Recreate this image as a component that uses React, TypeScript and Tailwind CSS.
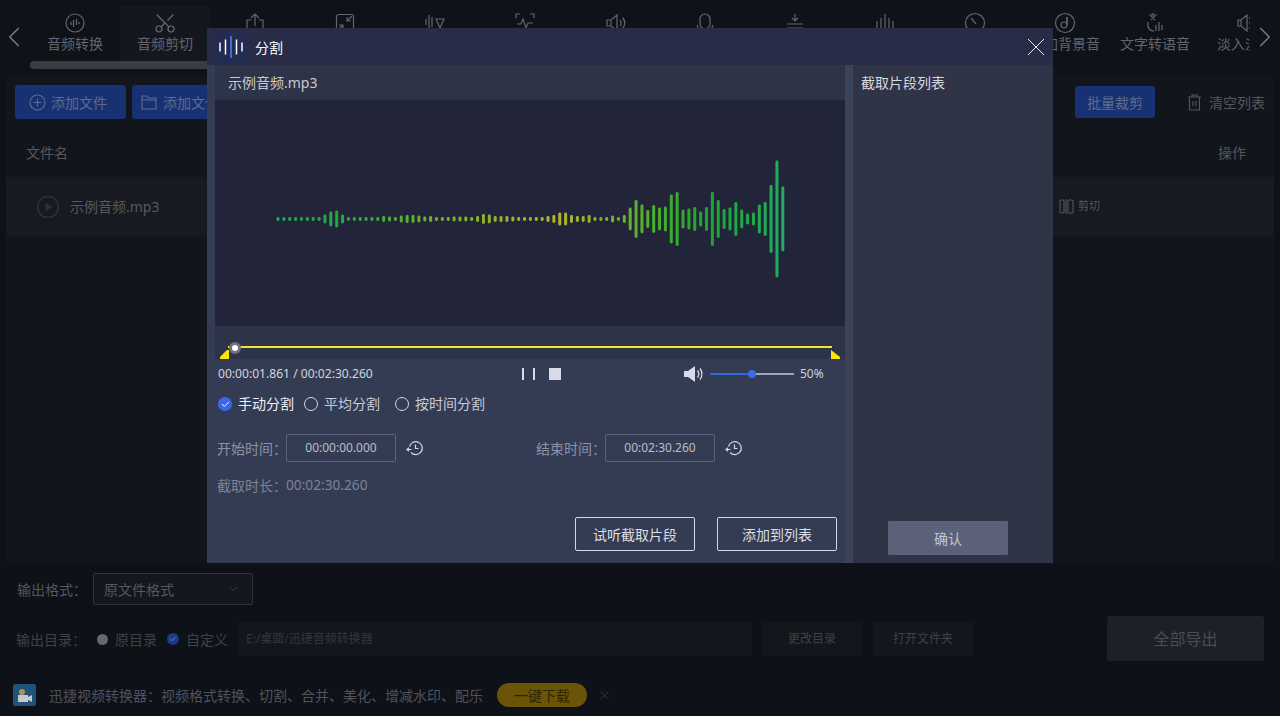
import React from "react";
import { ChevronLeft, ChevronRight, ChevronDown, Scissors, X, Check } from "lucide-react";

const font = "font-['Noto_Sans','Noto_Sans_CJK_SC',sans-serif]";

const heights = [
  3,3,3,3,3,3,3,3,8,14,16,8,
  3,3,3,3,3,3,5,4,3,6,7,7,6,4,5,3,3,3,4,4,4,3,5,9,8,5,5,5,4,3,3,
  3,3,3,5,7,12,12,7,5,5,7,3,3,3,6,3,7,
  22,37,28,17,27,22,24,48,53,18,20,23,14,23,53,37,19,22,33,18,10,12,28,33,67,116,64,
];

function Waveform() {
  return (
    <svg width="630" height="226" viewBox="215 100 630 226" className="block">
      <defs>
        <linearGradient id="wave" gradientUnits="userSpaceOnUse" x1="278" y1="0" x2="784" y2="0">
          <stop offset="0" stopColor="#1fa858" />
          <stop offset="0.12" stopColor="#22a83e" />
          <stop offset="0.3" stopColor="#6fb02e" />
          <stop offset="0.55" stopColor="#b5b52a" />
          <stop offset="0.72" stopColor="#55b02e" />
          <stop offset="0.85" stopColor="#1ba52f" />
          <stop offset="1" stopColor="#20ad62" />
        </linearGradient>
      </defs>
      {heights.map((h, i) => (
        <rect key={i} x={276.5 + i * 5.87} y={219 - (h + 1) / 2} width={3} height={h + 1} rx={1.4} fill="url(#wave)" />
      ))}
    </svg>
  );
}

function TabIcon({ i }: { i: number }) {
  const c = "#63666e";
  const p = { fill: "none", stroke: c, strokeWidth: 1.2 };
  return (
    <svg width="24" height="24" viewBox="0 0 24 24" className="block">
      {i === 0 && (
        <g {...p}>
          <circle cx="12" cy="12" r="9" />
          <path d="M8 11v3M10.5 9v7M13.5 8v6M16 11v2" />
        </g>
      )}
      {i === 2 && (
        <g {...p}>
          <path d="M8 9H4v12h16V9h-4M12 15V3M8 7l4-4 4 4" />
        </g>
      )}
      {i === 3 && (
        <g {...p}>
          <rect x="3.5" y="3.5" width="17" height="17" rx="2" />
          <path d="M19 5l-5 5M14 6v4h4M5 19l5-5M6 14h4v4" />
        </g>
      )}
      {i === 4 && (
        <g {...p}>
          <path d="M6 4v14M3 8v6M9 6v10M13 8l4 9 4-9z" />
        </g>
      )}
      {i === 5 && (
        <g {...p}>
          <path d="M3 7V3h4M17 3h4v4M3 17v4h4M21 17v4h-4M4 13h4l2-5 3 9 2-5h5" />
        </g>
      )}
      {i === 6 && (
        <g {...p}>
          <path d="M4 9h4l6-5v16l-6-5H4zM8 9v6M17 9c1.5 1.5 1.5 4.500 0 6M19.500 6.500c3 3 3 8 0 11" />
        </g>
      )}
      {i === 7 && (
        <g {...p}>
          <rect x="7" y="3" width="10" height="15" rx="5" />
          <path d="M4 14c1 4 4 7 8 7s7-3 8-7" />
        </g>
      )}
      {i === 8 && (
        <g {...p}>
          <path d="M12 3v7M9 7l3 3 3-3M4 13h16M4 17h16M12 20v2" />
        </g>
      )}
      {i === 9 && (
        <g {...p}>
          <path d="M4 10v8M8 7v13M12 3v17M16 7v13M20 10v8" />
        </g>
      )}
      {i === 10 && (
        <g {...p}>
          <circle cx="12" cy="12" r="9.500" />
          <path d="M8 7l5 6" />
        </g>
      )}
      {i === 11 && (
        <g {...p}>
          <circle cx="12" cy="12" r="9.500" />
          <circle cx="11" cy="14" r="3" />
          <path d="M14 14V6" strokeWidth="1.800" />
        </g>
      )}
      {i === 12 && (
        <g {...p}>
          <path d="M6 4h8M10 2v2M8 5l4 4M12 5l-4 4M5 11c-1 5 1 9 6 9M13 14v6M16 11v9M19 14v5" />
        </g>
      )}
      {i === 13 && (
        <g {...p}>
          <path d="M5 9h3l6-5v16l-6-5H5zM8 9v6M17 6v2M17 11v2M17 16v2" />
        </g>
      )}
    </svg>
  );
}

function HistoryIcon() {
  return (
    <svg width="18" height="18" viewBox="0 0 18 18" fill="none" stroke="#d4d6e2" strokeWidth="1.200" className="block">
      <path d="M3.500 7.500A6.500 6.500 0 1 1 5 13.500" />
      <path d="M1 10.500h4.500M3 8.800l-2 1.700 2 1.700" />
      <path d="M9.500 5.500V9.500H12.500" />
    </svg>
  );
}

function Radio({ label, checked }: { label: string; checked?: boolean }) {
  return (
    <div className="flex items-center gap-[6px]">
      {checked ? (
        <span className="flex items-center justify-center w-[14px] h-[14px] rounded-full bg-[#3a68ee]">
          <Check size={9} color="#fff" strokeWidth={2.5} />
        </span>
      ) : (
        <span className="w-[14px] h-[14px] rounded-full border border-[#d5d7e2]" />
      )}
      <span className={`text-[14px] leading-none ${checked ? "text-[#eef0f6]" : "text-[#c8cbd6]"}`}>{label}</span>
    </div>
  );
}

const tabs = ["音频转换","音频剪切","","","","","","","","","","添加背景音","文字转语音","淡入淡出"];

function Modal() {
  return (
    <div className="absolute left-[207px] top-[28px] w-[846px] h-[535px] bg-[#343c53] flex flex-col">
      <div className="h-[37px] shrink-0 bg-[#282c46] flex items-center pl-2 pr-[8px]">
        <div className="w-[32px] h-[32px] bg-[#232b4e] flex items-center justify-center">
          <svg width="28" height="22" viewBox="0 0 28 22" className="block">
            <path d="M3 6.500v9M8.500 3.500v15M19.500 3.500v15M25 6.500v9" stroke="#fff" strokeWidth="1.500" fill="none" />
            <path d="M14 0v22" stroke="#3a6ce6" strokeWidth="2" fill="none" />
          </svg>
        </div>
        <span className="ml-2 mt-[2px] text-[14px] text-white">分割</span>
        <svg width="18" height="18" viewBox="0 0 18 18" stroke="#e8e9f2" strokeWidth="1" fill="none" className="ml-auto block">
          <path d="M1 1l16 16M17 1L1 17" />
        </svg>
      </div>
      <div className="flex flex-1 min-h-0">
        <div className="w-[638px] pl-2 flex flex-col">
          <div className="h-[35px] bg-[#2e3447] flex items-center pl-[13px] text-[14px] text-[#c6c9d3]">示例音频.mp3</div>
          <div className="h-[226px] bg-[#222439]"><Waveform /></div>
          <div className="relative h-[33px] bg-[#2e3447]">
            <div className="absolute left-[13px] top-[20px] w-[604px] h-[2px] bg-[#f2e22c]" />
            <div className="absolute left-[14px] top-[16px] w-[12px] h-[12px] rounded-full bg-[#6d7183] flex items-center justify-center">
              <span className="w-[6px] h-[6px] rounded-full bg-white" />
            </div>
            <svg width="9" height="9" viewBox="0 0 9 9" className="absolute left-[5px] bottom-0 block"><path d="M0 9L0 7 7 0h2v9z" fill="#ffe600" /></svg>
            <svg width="9" height="9" viewBox="0 0 9 9" className="absolute right-[5px] bottom-0 block"><path d="M0 0l9 7v2H0z" fill="#ffe600" /></svg>
          </div>
          <div className="h-[30px] flex items-center pl-[3px]">
            <span className="w-[304px] text-[12.1px] text-[#d3d6df]">00:00:01.861 / 00:02:30.260</span>
            <span className="w-[2px] h-[12px] bg-[#d8dae8]" />
            <span className="ml-[9px] w-[2px] h-[12px] bg-[#d8dae8]" />
            <span className="ml-[14px] w-[12px] h-[12px] bg-[#d8dae8]" />
            <svg width="20" height="16" viewBox="0 0 20 16" className="ml-[123px] block">
              <path d="M0 5h4l7-5v16l-7-5H0z" fill="#d8dae8" />
              <path d="M13.500 4.500c1.500 2 1.500 5 0 7M16 2.500c2.500 3 2.500 8 0 11" stroke="#d8dae8" strokeWidth="1.300" fill="none" />
            </svg>
            <div className="relative ml-[6px] w-[84px] h-[2px] bg-[#a3a6b2]">
              <div className="h-full w-[42px] bg-[#3568e0]" />
              <span className="absolute left-[38px] top-[-3px] w-[8px] h-[8px] rounded-full bg-[#3a6cf0]" />
            </div>
            <span className="ml-[6px] text-[12px] text-[#cdd0da]">50%</span>
          </div>
          <div className="mt-[8px] h-[14px] flex items-center pl-[3px]">
            <Radio label="手动分割" checked />
            <div className="ml-[10px]"><Radio label="平均分割" /></div>
            <div className="ml-[15px]"><Radio label="按时间分割" /></div>
          </div>
          <div className="mt-[23px] flex items-center h-[28px] pl-[2px]">
            <span className="w-[69px] text-[14px] whitespace-nowrap text-[#8c92a5]">开始时间：</span>
            <div className="w-[110px] h-[28px] border border-[#5c647b] rounded-[2px] flex items-center justify-center text-[12px] text-[#b9bdc9]">00:00:00.000</div>
            <div className="ml-[10px]"><HistoryIcon /></div>
            <span className="ml-[112px] w-[69px] text-[14px] whitespace-nowrap text-[#8c92a5]">结束时间：</span>
            <div className="w-[110px] h-[28px] border border-[#5c647b] rounded-[2px] flex items-center justify-center text-[12px] text-[#b9bdc9]">00:02:30.260</div>
            <div className="ml-[10px]"><HistoryIcon /></div>
          </div>
          <div className="mt-[13px] h-[20px] flex items-center pl-[2px]">
            <span className="w-[69px] text-[14px] whitespace-nowrap text-[#7d8397]">截取时长：</span>
            <span className="text-[13.7px] text-[#7d8397]">00:02:30.260</span>
          </div>
          <div className="mt-[22px] flex justify-end gap-[22px] pr-[8px]">
            <button className="w-[120px] h-[34px] border border-[#d4d6e6] rounded-[2px] text-[14px] text-[#dcdee8]">试听截取片段</button>
            <button className="w-[120px] h-[34px] border border-[#d4d6e6] rounded-[2px] text-[14px] text-[#dcdee8]">添加到列表</button>
          </div>
        </div>
        <div className="w-[8px] bg-[#3b4359]" />
        <div className="w-[200px] bg-[#2f3446] flex flex-col pb-[8px]">
          <div className="pl-2 pt-[7px] text-[14px] text-[#d6d9e3]">截取片段列表</div>
          <button className="mt-auto ml-[35px] w-[120px] h-[34px] bg-[#5a6178] text-[14px] text-[#c3c5cf] rounded-[1px]">确认</button>
        </div>
      </div>
    </div>
  );
}

export default function App() {
  return (
    <div className={`relative w-[1280px] h-[716px] overflow-hidden bg-[#0e1118] flex flex-col ${font}`}>
      {/* tabs */}
      <div className="relative h-[61px] shrink-0 flex pl-[30px] pt-[6px] bg-[#0f1219] overflow-hidden">
        {tabs.map((t, i) => (
          <div key={i} className={`w-[90px] shrink-0 flex flex-col items-center pt-[5px] ${i === 1 ? "bg-[#15171e]" : ""}`}>
            {i === 1 ? <Scissors size={24} color="#6a6d75" strokeWidth={1.2} className="-rotate-90" /> : <TabIcon i={i} />}
            {t && <span className="text-[14px] leading-[18px] text-[#63666e] whitespace-nowrap">{t}</span>}
          </div>
        ))}
        <ChevronLeft size={34} color="#74767d" strokeWidth={1.2} className="absolute left-[-3px] top-[20px]" />
        <div className="absolute right-0 top-0 h-full w-[30px] bg-[#0f1219] flex items-center justify-center">
          <ChevronRight size={34} color="#74767d" strokeWidth={1.2} className="mt-[13px] shrink-0" />
        </div>
      </div>
      {/* scrollbar */}
      <div className="h-[15px] shrink-0 pl-[30px] pb-[7px] bg-[#0f1219]">
        <div className="w-[640px] h-[8px] rounded-full bg-[#3b3d42]" />
      </div>
      {/* file panel */}
      <div className="h-[487px] shrink-0 mx-[6px] bg-[#12151c] flex flex-col">
        <div className="h-[52px] shrink-0 flex items-center pl-[9px] pr-[9px]">
          <button className="w-[111px] h-[34px] bg-[#183172] rounded-[3px] flex items-center justify-start pl-[14px] gap-[5px] text-[14px] text-[#5f6c8e]">
            <svg width="17" height="17" viewBox="0 0 17 17" fill="none" stroke="#5f6c8e" strokeWidth="1.100"><circle cx="8.500" cy="8.500" r="7.500" /><path d="M8.500 4.500v8M4.500 8.500h8" /></svg>
            添加文件
          </button>
          <button className="ml-[6px] w-[111px] h-[34px] bg-[#183172] rounded-[3px] flex items-center justify-start pl-[9px] gap-[6px] text-[14px] text-[#5f6c8e] whitespace-nowrap">
            <svg width="16" height="15" viewBox="0 0 16 15" fill="none" stroke="#5f6c8e" strokeWidth="1.100"><path d="M1 1h5l1 2h8v11H1zM1 5h14" /></svg>
            添加文件夹
          </button>
          <button className="ml-auto w-[80px] h-[32px] bg-[#183172] rounded-[3px] text-[14px] text-[#5f6c8e]">批量裁剪</button>
          <div className="ml-[32px] flex items-center gap-[7px] text-[14px] text-[#54575f]">
            <svg width="15" height="17" viewBox="0 0 15 17" fill="none" stroke="#54575f" strokeWidth="1.100"><path d="M1 3h13M5 3V1h5v2M2.500 3v13h10V3M6 7v5M9 7v5" /></svg>
            清空列表
          </div>
        </div>
        <div className="h-[49px] shrink-0 flex items-center justify-between pl-[20px] pr-[28px] text-[14px] text-[#55585f]">
          <span>文件名</span>
          <span>操作</span>
        </div>
        <div className="h-[59px] shrink-0 bg-[#171a21] flex items-center pl-[30px] pr-[174px] text-[14px] text-[#55585f]">
          <svg width="24" height="24" viewBox="0 0 24 24" fill="none" stroke="#2e3037" strokeWidth="1.500" className="block">
            <circle cx="12" cy="12" r="10.500" />
            <path d="M9.500 7.500l7 4.500-7 4.500z" fill="#2e3037" stroke="none" />
          </svg>
          <span className="ml-[10px]">示例音频.mp3</span>
          <div className="ml-auto flex items-center gap-[4px] text-[11px]">
            <svg width="15" height="15" viewBox="0 0 15 15" fill="none" stroke="#55585f" strokeWidth="1.100"><rect x="1" y="1" width="4" height="13" rx="1" /><rect x="9" y="1" width="5" height="13" rx="1" /><path d="M7 0v15" /></svg>
            剪切
          </div>
        </div>
      </div>
      {/* output */}
      <div className="flex items-center h-[32px] mt-[10px] pl-[17px] shrink-0">
        <span className="w-[76px] text-[14px] whitespace-nowrap text-[#54575f]">输出格式：</span>
        <div className="w-[160px] h-[32px] border border-[#30333b] rounded-[2px] bg-[#14171e] flex items-center justify-between pl-[10px] pr-[12px] text-[14px] text-[#54575f]">
          原文件格式
          <ChevronDown size={14} color="#4d5058" strokeWidth={1.2} />
        </div>
      </div>
      <div className="flex items-center h-[34px] mt-[17px] pl-[16px] shrink-0 text-[14px] text-[#3f4148]">
        <span className="w-[80px] whitespace-nowrap">输出目录：</span>
        <span className="ml-[1px] w-[11px] h-[11px] rounded-full bg-[#66686d]" />
        <span className="ml-[7px]">原目录</span>
        <span className="ml-[10px] w-[12px] h-[12px] rounded-full bg-[#1a3a86] flex items-center justify-center"><Check size={8} color="#7b8cb8" strokeWidth={2.5} /></span>
        <span className="ml-[7px]">自定义</span>
        <div className="ml-[10px] w-[514px] h-[34px] bg-[#14161d] flex items-center pl-[8px] text-[12px] text-[#34363c]">E:/桌面/迅捷音频转换器</div>
        <div className="ml-[10px] w-[100px] h-[34px] bg-[#14161d] flex items-center justify-center text-[12px]">更改目录</div>
        <div className="ml-[11px] w-[100px] h-[34px] bg-[#14161d] flex items-center justify-center text-[12px]">打开文件夹</div>
        <div className="ml-[134px] -mt-[1px] w-[157px] h-[45px] rounded-[3px] bg-[#1d2027] flex items-center justify-center text-[16px] text-[#4b4d53]">全部导出</div>
      </div>
      {/* promo */}
      <div className="flex items-center h-[24px] mt-[27px] pl-[13px] shrink-0">
        <div className="w-[23px] h-[22px] rounded-[2px] bg-[#21527a] flex items-center justify-center">
          <svg width="17" height="15" viewBox="0 0 17 15"><circle cx="6" cy="4" r="3" fill="#b08f52" /><rect x="2" y="7" width="10" height="7" fill="#c5c9cf" /><path d="M12 9l4-2v7l-4-2z" fill="#c5c9cf" /></svg>
        </div>
        <span className="ml-[13px] text-[14px] whitespace-nowrap text-[#50535a]">迅捷视频转换器：视频格式转换、切割、合并、美化、增减水印、配乐</span>
        <span className="ml-[14px] w-[90px] h-[24px] rounded-full bg-[#6a5407] flex items-center justify-center text-[14px] text-[#2e2600]">一键下载</span>
        <X size={15} color="#4d4f55" strokeWidth={1} className="ml-[10px]" />
      </div>
      <Modal />
    </div>
  );
}
